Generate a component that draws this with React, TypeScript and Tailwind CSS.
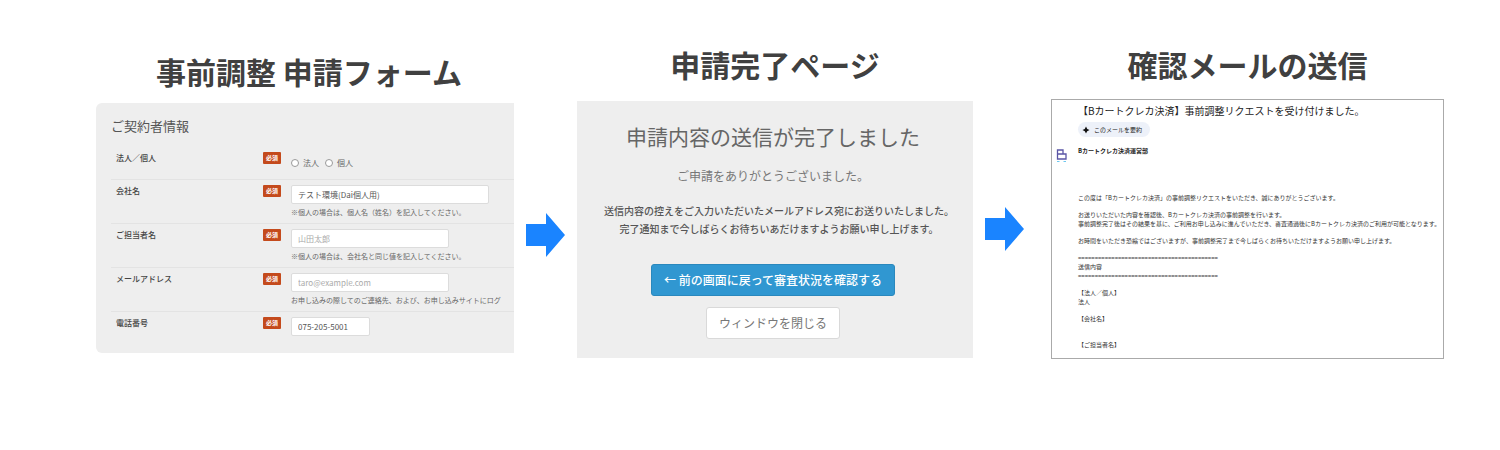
import type { ReactNode } from "react";

type Field = {
  id: string;
  label: string;
  value?: string;
  placeholder?: string;
  hint?: string;
  type?: string;
  width: string;
};

const FIELDS: Field[] = [
  {
    id: "company",
    label: "会社名",
    value: "テスト環境(Dai個人用)",
    hint: "※個人の場合は、個人名（姓名）を記入してください。",
    width: "w-[198px]",
  },
  {
    id: "person",
    label: "ご担当者名",
    placeholder: "山田太郎",
    hint: "※個人の場合は、会社名と同じ値を記入してください。",
    width: "w-[158px]",
  },
  {
    id: "email",
    label: "メールアドレス",
    placeholder: "taro@example.com",
    hint: "お申し込みの際してのご連絡先、および、お申し込みサイトにログ",
    type: "email",
    width: "w-[158px]",
  },
  { id: "tel", label: "電話番号", value: "075-205-5001", type: "tel", width: "w-[79px]" },
];

const RULE = "=".repeat(42);

function StepTitle({ children }: { children: ReactNode }) {
  return (
    <h2 className="whitespace-nowrap text-center text-[30px] font-bold leading-10 text-[#404040]">
      {children}
    </h2>
  );
}

function Required() {
  return (
    <span className="flex h-3 w-[18px] items-center justify-center rounded-[1px] bg-[#c44a1c] text-[6px] font-bold leading-none text-white">
      必須
    </span>
  );
}

function StepArrow() {
  return (
    <svg viewBox="0 0 39 44" className="h-11 w-[39px]" aria-hidden="true">
      <path d="M0 11h20V0l19 22-19 22V33H0z" fill="#1a84ff" />
    </svg>
  );
}

function RadioOption({ id, label }: { id: string; label: string }) {
  return (
    <span className="flex items-center gap-1">
      <input
        id={id}
        type="radio"
        name="entity"
        className="h-2 w-2 appearance-none rounded-full border border-[#999] bg-white checked:bg-[#3097d1]"
      />
      <label htmlFor={id}>{label}</label>
    </span>
  );
}

function FieldRow({ field }: { field: Field }) {
  return (
    <div className="flex h-11 border-t border-[#e3e3e3] pl-[5px] pt-[5px]">
      <label htmlFor={field.id} className="w-[147px] flex-none text-[8px] font-medium leading-3 text-[#444]">
        {field.label}
      </label>
      <div className="w-7 flex-none">
        <Required />
      </div>
      <div className="min-w-0 flex-1">
        <input
          id={field.id}
          type={field.type ?? "text"}
          defaultValue={field.value}
          placeholder={field.placeholder}
          className={`block h-[19px] rounded-[2px] border border-[#dcdcdc] bg-white px-1.5 text-[8px] text-[#555] placeholder:text-[#aaa] ${field.width}`}
        />
        {field.hint && (
          <p className="mt-[2px] whitespace-nowrap text-[7px] leading-3 text-[#666]">{field.hint}</p>
        )}
      </div>
    </div>
  );
}

function ApplicationForm() {
  return (
    <form className="h-[250px] overflow-hidden rounded-l-md bg-[#eee] pl-[15px] pt-[11px]">
      <h3 className="text-[13px] leading-6 text-[#555]">ご契約者情報</h3>
      <div className="mt-1.5 flex h-[35px] items-start pl-[5px] pt-2">
        <span id="entity-label" className="w-[147px] flex-none text-[8px] font-medium leading-3 text-[#444]">
          法人／個人
        </span>
        <div className="w-7 flex-none">
          <Required />
        </div>
        <div
          role="radiogroup"
          aria-labelledby="entity-label"
          className="flex gap-1.5 pt-[5px] text-[8px] leading-3 text-[#666]"
        >
          <RadioOption id="entity-corporate" label="法人" />
          <RadioOption id="entity-personal" label="個人" />
        </div>
      </div>
      {FIELDS.map((field) => (
        <FieldRow key={field.id} field={field} />
      ))}
    </form>
  );
}

function CompletePage() {
  return (
    <div className="flex h-[257px] flex-col items-center overflow-hidden whitespace-nowrap bg-[#eee] pr-1 pt-[19px]">
      <h3 className="text-[21px] leading-8 text-[#666]">申請内容の送信が完了しました</h3>
      <p className="mt-[14px] text-[12px] leading-5 text-[#777]">ご申請をありがとうございました。</p>
      <p className="mt-4 pl-3 text-center text-[10px] font-medium leading-[18px] text-[#555]">
        送信内容の控えをご入力いただいたメールアドレス宛にお送りいたしました。
        <br />
        完了通知まで今しばらくお待ちいあだけますようお願い申し上げます。
      </p>
      <button
        type="button"
        className="mt-[26px] h-8 rounded-[3px] border border-[#2a88bd] bg-[#3097d1] px-3 text-[12px] font-medium text-white"
      >
        ← 前の画面に戻って審査状況を確認する
      </button>
      <button
        type="button"
        className="mt-[11px] h-8 rounded-[3px] border border-[#d9d9d9] bg-white px-3 text-[12px] text-[#777]"
      >
        ウィンドウを閉じる
      </button>
    </div>
  );
}

function SenderLogo() {
  return (
    <svg viewBox="0 0 11 14" className="h-[14px] w-[11px]" fill="none" aria-hidden="true">
      <path d="M1.500 1h5.500v4h3v5H1.500zM1.500 5H7" stroke="#5a55a5" strokeWidth="1.300" />
      <path d="M1 12.500h2.500M7.500 12.500H10" stroke="#6cc8f0" strokeWidth="1.200" />
    </svg>
  );
}

function ConfirmationMail() {
  return (
    <article className="flex h-[260px] overflow-hidden whitespace-nowrap border border-[#aaa] bg-white text-[6px] leading-[9px] text-[#333]">
      <div className="flex w-[26px] flex-none justify-start pl-1 pt-[49px]">
        <SenderLogo />
      </div>
      <div className="min-w-0 flex-1 pt-[3px]">
        <h3 className="text-[10px] leading-4 text-[#222]">
          【Bカートクレカ決済】事前調整リクエストを受け付けました。
        </h3>
        <button
          type="button"
          className="mt-[3px] flex h-[15px] items-center gap-1 rounded-full bg-[#edf1f9] pl-1 pr-2 text-[#222]"
        >
          <svg viewBox="0 0 8 8" className="h-2 w-2" aria-hidden="true">
            <path d="M4 .5Q4.600 3.400 7.500 4 4.600 4.600 4 7.500 3.400 4.600.5 4 3.400 3.400 4 .5z" fill="#111" />
          </svg>
          このメールを要約
        </button>
        <p className="mt-[9px] font-bold text-[#222]">Bカートクレカ決済運営部</p>
        <div className="mt-[38px] flex flex-col gap-2">
          <p>この度は「Bカートクレカ決済」の事前調整リクエストをいただき、誠にありがとうございます。</p>
          <p>
            お送りいただいた内容を確認後、Bカートクレカ決済の事前調整を行います。
            <br />
            事前調整完了後はその結果を基に、ご利用お申し込みに進んでいただき、審査通過後にBカートクレカ決済のご利用が可能となります。
          </p>
          <p>お時間をいただき恐縮ではございますが、事前調整完了まで今しばらくお待ちいただけますようお願い申し上げます。</p>
          <p>
            {RULE}
            <br />
            送信内容
            <br />
            {RULE}
          </p>
          <p>
            【法人／個人】
            <br />
            法人
          </p>
          <p className="pb-[9px]">【会社名】</p>
          <p>【ご担当者名】</p>
        </div>
      </div>
    </article>
  );
}

export default function App() {
  return (
    <main
      lang="ja"
      className="grid grid-cols-[418fr_63fr_396fr_78fr_393fr] items-start bg-white pb-10 pl-24 pr-14 font-['Noto_Sans_CJK_JP',sans-serif]"
    >
      <section className="flex min-w-0 flex-col gap-3 pt-[51px]">
        <div className="pl-2">
          <StepTitle>事前調整 申請フォーム</StepTitle>
        </div>
        <ApplicationForm />
      </section>
      <div className="flex justify-center pt-[213px]">
        <StepArrow />
      </div>
      <section className="flex min-w-0 flex-col gap-[17px] pt-11">
        <StepTitle>申請完了ページ</StepTitle>
        <CompletePage />
      </section>
      <div className="flex justify-center pr-4 pt-[207px]">
        <StepArrow />
      </div>
      <section className="flex min-w-0 flex-col gap-[15px] pt-11">
        <StepTitle>確認メールの送信</StepTitle>
        <ConfirmationMail />
      </section>
    </main>
  );
}
